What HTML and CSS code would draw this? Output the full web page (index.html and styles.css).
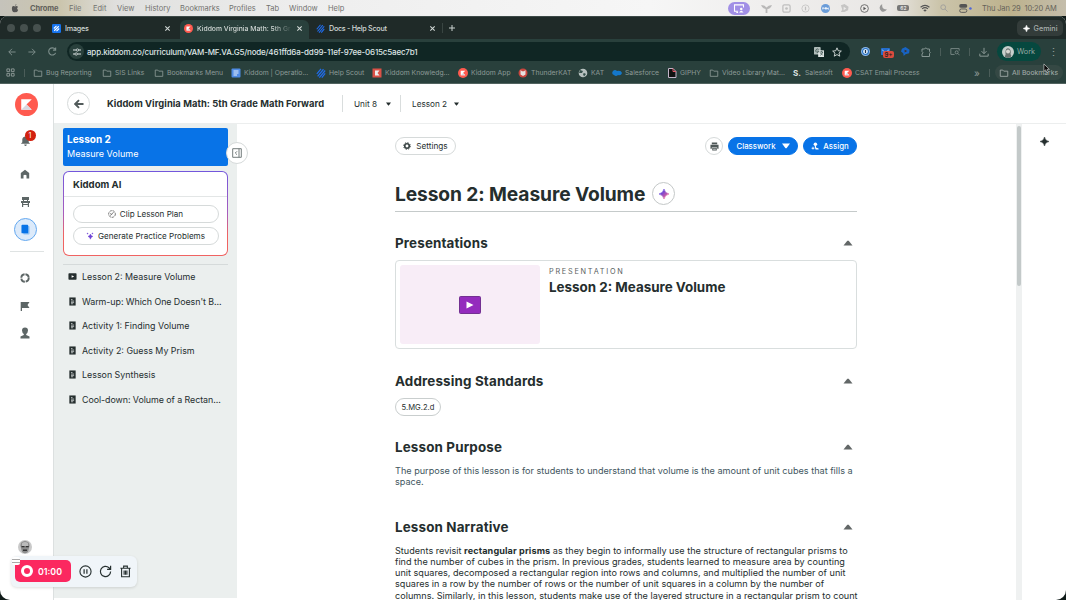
FILE: index.html
```html
<!DOCTYPE html>
<html lang="en">
<head>
    <meta charset="UTF-8">
    <meta name="viewport" content="width=device-width, initial-scale=1.0">
    <title>Kiddom Virginia Math: 5th Grade Math Forward</title>
    <link rel="stylesheet" href="styles.css">
</head>
<body>
    <!-- Shared icons -->
    <svg class="defs" width="0" height="0">
        <symbol id="folder" viewBox="0 0 12 12"><path d="M1.5 2.5h3l1.2 1.3h4.8v6.2h-9z" fill="none" stroke="currentColor" stroke-width="1"/></symbol>
        <symbol id="kiddom" viewBox="0 0 24 24"><circle cx="12" cy="12" r="12" fill="#ff5a4f"/><path d="M6.5 6.5h11L12 12l5.500 5.500h-11z" fill="#fff"/><path d="M6.500 17.500L12 12l5.500 5.500z" fill="#d9d7e0"/></symbol>
        <symbol id="bolt" viewBox="0 0 12 12"><path d="M1 7l5-6M2 10l7-8.500M4 11.500l7-8.500M7 11.500l4-5" stroke="#1f6bea" stroke-width="1.500"/></symbol>
        <symbol id="close" viewBox="0 0 8 8"><path d="M1.500 1.500l5 5M6.500 1.500l-5 5" stroke="currentColor" stroke-width="1.200"/></symbol>
        <symbol id="doc" viewBox="0 0 10 10"><path d="M1.500.5h7v9h-7z" fill="#252e2e"/><path d="M3.300 2.800h1.700M3.300 4.500h3.500M3.300 6h3.500M3.300 7.500h2.500" stroke="#e4e9e9" stroke-width=".8"/></symbol>
        <symbol id="spark" viewBox="0 0 12 12"><path d="M6 0Q6.800 5.200 12 6Q6.800 6.800 6 12Q5.200 6.800 0 6Q5.200 5.200 6 0z" fill="currentColor" stroke="currentColor" stroke-width=".7"/></symbol>
        <symbol id="down" viewBox="0 0 8 6"><path d="M0 .5h8L4.500 5.300h-1z" fill="currentColor"/></symbol>
        <symbol id="up" viewBox="0 0 10 6"><path d="M.5 5.500L4.300.8h1.400l3.800 4.700z" fill="#626767"/></symbol>
    </svg>

    <!-- macOS menu bar -->
    <div class="menubar">
        <div class="menus">
            <svg viewBox="0 0 10 12" width="8" height="9"><path d="M7 0Q5 .6 5 2.400Q6.800 2.300 7 0zM5 3.200Q7.800 2 9 4Q6.600 5.800 9.200 8Q7.800 12 5.200 10.800Q2.600 12 1.200 8.500Q0 3 3 2.800Q4 2.700 5 3.200z" fill="#555"/></svg>
            <b>Chrome</b><span>File</span><span>Edit</span><span>View</span><span>History</span><span>Bookmarks</span><span>Profiles</span><span>Tab</span><span>Window</span><span>Help</span>
        </div>
        <div class="status">
            <span class="share"><svg viewBox="0 0 12 10" width="12" height="9"><path d="M5 8H1V1h10v3M3 9.500h2" fill="none" stroke="#fff" stroke-width="1.200"/><circle cx="8.500" cy="5.500" r="1.400" fill="#fff"/><path d="M6 9.500q2.500-4 5 0z" fill="#fff"/></svg></span>
            <svg class="faint" viewBox="0 0 12 10" width="11" height="9"><path d="M0 1q4 0 6 3q2-3 6-3q-1 4-5 4.500V10H5V5.500Q1 5 0 1z" fill="#777"/></svg>
            <svg class="faint" viewBox="0 0 10 10" width="9" height="9"><rect x="1" y="1" width="8" height="8" rx="1.500" fill="none" stroke="#888" stroke-width="1.400"/><circle cx="5" cy="5" r="1.500" fill="#888"/></svg>
            <svg class="faint" viewBox="0 0 10 10" width="9" height="9"><circle cx="5" cy="5" r="4" fill="none" stroke="#999"/><path d="M5 3v4" stroke="#888" stroke-width="1.400"/></svg>
            <svg viewBox="0 0 10 10" width="9" height="9"><circle cx="5" cy="5" r="5" fill="#6a9cd8"/><path d="M2 6V4l1.500 1L5 4v2M6 6V4l2 2V4" fill="none" stroke="#fff"/></svg>
            <svg class="faint" viewBox="0 0 10 10" width="9" height="9"><path d="M1 1.500L5 0l4.500 3L9 7 5 9H1l1.500-3z" fill="#999"/><path d="M4 3l3 2-3 2z" fill="#eee"/></svg>
            <svg viewBox="0 0 10 10" width="9" height="9"><circle cx="5" cy="5" r="4.300" fill="none" stroke="#666"/><path d="M3.800 3l3 2-3 2z" fill="#555"/></svg>
            <svg viewBox="0 0 10 10" width="8" height="8"><path d="M4 0Q3 7 10 7Q7 11 3 9Q-2 4 4 0z" fill="#999"/></svg>
            <span class="battery">62</span>
            <svg viewBox="0 0 12 10" width="10" height="9"><path d="M.7 3.500q5.300-4.500 10.600 0M2.500 5.500q3.500-3 7 0" fill="none" stroke="#555" stroke-width="1.300"/><path d="M4 7q2-1.500 4 0L6 9z" fill="#555"/></svg>
            <svg viewBox="0 0 10 10" width="8" height="8"><circle cx="4" cy="4" r="3" fill="none" stroke="#999"/><path d="M6.300 6.300L9.500 9.500" stroke="#999"/></svg>
            <svg viewBox="0 0 14 10" width="13" height="9"><rect x="0" y="0" width="9" height="4.300" rx="2.100" fill="#555"/><rect x=".5" y="5.500" width="8" height="3.800" rx="1.900" fill="none" stroke="#555"/><circle cx="12.500" cy="5" r="1.400" fill="#4f66d8"/></svg>
            <span class="clock">Thu Jan 29&nbsp; 10:20 AM</span>
        </div>
    </div>

    <div class="window">
        <!-- Browser chrome -->
        <div class="tabs">
            <div class="lights"><i></i><i></i><i></i></div>
            <div class="tab tab-images">
                <svg viewBox="0 0 10 10" width="9" height="9"><rect width="10" height="10" rx="1.500" fill="#1673ed"/><path d="M2 5l3-3M2.500 7.500l5-5M5 8l3-3" stroke="#fff" stroke-width="1.200"/></svg>
                <span>Images</span>
                <svg width="7" height="7"><use href="#close"/></svg>
            </div>
            <div class="tab tab-active">
                <svg width="9" height="9"><use href="#kiddom"/></svg>
                <span class="fade">Kiddom Virginia Math: 5th Gr</span>
                <svg width="7" height="7"><use href="#close"/></svg>
            </div>
            <div class="tab tab-docs">
                <svg width="9" height="9"><use href="#bolt"/></svg>
                <span>Docs - Help Scout</span>
                <svg width="7" height="7"><use href="#close"/></svg>
            </div>
            <svg class="plus" viewBox="0 0 8 8" width="8" height="8"><path d="M4 1v6M1 4h6" stroke="#cbd2d0" stroke-width="1"/></svg>
            <div class="gemini"><svg width="7" height="7"><use href="#spark"/></svg>Gemini</div>
        </div>

        <div class="toolbar">
            <div class="nav">
                <svg viewBox="0 0 10 10" width="8" height="8"><path d="M9.500 5H1M5 1L1 5l4 4" fill="none" stroke="#7d8e8b" stroke-width="1.200"/></svg>
                <svg viewBox="0 0 10 10" width="8" height="8"><path d="M.5 5H9M5 1l4 4-4 4" fill="none" stroke="#7d8e8b" stroke-width="1.200"/></svg>
                <svg viewBox="0 0 10 10" width="9" height="9"><path d="M8.500 6.500A4 4 0 1 1 8 2.500M8.500.5v3h-3" fill="none" stroke="#7d8e8b" stroke-width="1.200"/></svg>
            </div>
            <div class="url">
                <span class="site"><svg viewBox="0 0 10 10" width="8" height="8"><path d="M0 2.500h4M7 2.500h3M0 7.500h2.500M5.500 7.500H10" stroke="#d9e0df" stroke-width="1.300"/><circle cx="5.500" cy="2.500" r="1.500" fill="none" stroke="#d9e0df"/><circle cx="4" cy="7.500" r="1.500" fill="none" stroke="#d9e0df"/></svg></span>
                <span class="address">app.kiddom.co/curriculum/VAM-MF.VA.G5/node/461ffd6a-dd99-11ef-97ee-0615c5aec7b1</span>
                <svg viewBox="0 0 12 12" width="10" height="10"><rect width="8" height="9" rx="1" fill="#aebbb8"/><rect x="5" y="4" width="7" height="8" fill="#dfe5e4"/><path d="M5.500 3A2 2 0 1 0 6 5H4M7 6h4M9 5v1M10.500 6q-1 3-3 4M7.500 7l3 3" fill="none" stroke="#27403c" stroke-width=".8"/></svg>
                <svg viewBox="0 0 12 12" width="10" height="10"><path d="M6 1l1.500 3.500 3.700.4-2.800 2.400.9 3.700L6 9.100 2.700 11l.9-3.700L.8 4.900l3.700-.4z" fill="none" stroke="#d5dddb" stroke-width="1.100"/></svg>
            </div>
            <div class="extensions">
                <svg viewBox="0 0 10 10" width="9" height="9"><circle cx="5" cy="5" r="5" fill="#8db7ea"/><circle cx="5" cy="5" r="3.300" fill="#d8e7f7" stroke="#2570c0" stroke-width="1.200"/><path d="M5 3.300v3.400" stroke="#234" stroke-width="1.200"/></svg>
                <span class="mail"><svg viewBox="0 0 10 10" width="9" height="9"><rect y="1" width="10" height="8" rx="1" fill="#236dcc"/><path d="M1 3l4 3 4-3" stroke="#9cc4ee" fill="none"/></svg><em>9+</em></span>
                <svg viewBox="0 0 10 10" width="9" height="9"><path d="M1 2l4-2 4.500 3L9 7 5 8l-2 2-.5-3L0 5z" fill="#1764c4"/><path d="M4 3l3 1.500L4 6z" fill="#3f342d"/></svg>
                <svg viewBox="0 0 10 10" width="10" height="10"><path d="M1 2h2.500a1.300 1.300 0 0 1 2.500 0h2.500v2.500a1.200 1.200 0 0 1 0 2V9.500H1V7Q3 5.800 1 4.500z" fill="none" stroke="#869693"/></svg>
                <i class="sep"></i>
                <svg viewBox="0 0 12 10" width="10" height="9"><path d="M5.500 8.500H1v-7h10V4" fill="none" stroke="#83928f"/><circle cx="8" cy="6" r="1.800" fill="none" stroke="#83928f"/><path d="M9.300 7.300L11.500 9.500" stroke="#83928f"/></svg>
                <i class="sep"></i>
                <svg viewBox="0 0 12 12" width="10" height="10"><path d="M6 1v7M3 5l3 3 3-3M1 8v3h10V8" fill="none" stroke="#8b9996" stroke-width="1.200"/></svg>
                <div class="profile"><svg viewBox="0 0 12 12" width="12" height="12"><circle cx="6" cy="6" r="6" fill="#c7cfcd"/><path d="M3.500 5Q4 1.500 7 2.500Q9.500 4 8.500 8Q11 11 6 12Q1 11 3.500 9z" fill="#68716f"/><circle cx="6" cy="5.500" r="2" fill="#d6d6d2"/></svg>Work</div>
                <span class="kebab">⋮</span>
            </div>
        </div>

        <div class="bookmarks">
            <svg viewBox="0 0 10 10" width="9" height="9"><path d="M1 1h3v3H1zM6 1h3v3H6zM1 6h3v3H1zM6 6h3v3H6z" fill="none" stroke="#8e9b99"/></svg>
            <i class="sep"></i>
            <div class="bookmark"><svg><use href="#folder"/></svg>Bug Reporting</div>
            <div class="bookmark"><svg><use href="#folder"/></svg>SIS Links</div>
            <div class="bookmark"><svg><use href="#folder"/></svg>Bookmarks Menu</div>
            <div class="bookmark"><svg viewBox="0 0 10 10"><rect x=".5" y=".5" width="9" height="9" rx="1" fill="#4f8be5"/><path d="M2.500 3h5M2.500 5h5M2.500 7h3.500" stroke="#e8f0fb"/></svg>Kiddom | Operatio...</div>
            <div class="bookmark"><svg><use href="#bolt"/></svg>Help Scout</div>
            <div class="bookmark"><svg viewBox="0 0 10 10"><rect x=".5" y=".5" width="9" height="9" fill="#db5147"/><path d="M3 2.500h4.500L5.500 5l2 2.500H3z" fill="#eee"/></svg>Kiddom Knowledg...</div>
            <div class="bookmark"><svg><use href="#kiddom"/></svg>Kiddom App</div>
            <div class="bookmark"><svg viewBox="0 0 10 10"><circle cx="5" cy="5" r="4.500" fill="#c9463f"/><path d="M2.500 2L4 3.200h2L7.500 2v4.500L5 8 2.500 6.500z" fill="#e5e0df"/></svg>ThunderKAT</div>
            <div class="bookmark"><svg viewBox="0 0 10 10"><circle cx="5" cy="5" r="4.300" fill="#b6c0be"/><path d="M2 2l3 1-1 2-3 0M6 5l2 1-2 2.500L5 6z" fill="#35504b"/></svg>KAT</div>
            <div class="bookmark"><svg viewBox="0 0 10 10"><path d="M1 3q2-2 4 0q4-1 5 2q-1 3-4 2q-2 2-4 0q-3-1-1-4z" fill="#1477ca"/></svg>Salesforce</div>
            <div class="bookmark"><svg viewBox="0 0 10 10"><path d="M1.500.5H6L9 3.500v6H1.500z" fill="#111" stroke="#c4b5c9"/><path d="M6 .5v3h3" fill="none" stroke="#e55c6a"/></svg>GIPHY</div>
            <div class="bookmark"><svg><use href="#folder"/></svg>Video Library Mat...</div>
            <div class="bookmark"><span class="salesloft">S.</span>Salesloft</div>
            <div class="bookmark"><svg><use href="#kiddom"/></svg>CSAT Email Process</div>
            <span class="more">»</span>
            <i class="sep"></i>
            <div class="bookmark all"><svg><use href="#folder"/></svg>All Bookmarks</div>
        </div>

        <!-- Kiddom app -->
        <div class="app">
            <nav class="rail">
                <svg class="logo" width="23" height="23"><use href="#kiddom"/></svg>
                <div class="bell"><svg viewBox="0 0 12 12" width="11" height="11"><path d="M1 9.500L2.500 8V5Q2.500 2 6 1.500Q9.500 2 9.500 5v3L11 9.500zM4.500 10.300h3Q7 12 6 12T4.500 10.300z" fill="#5d6666"/></svg><em>1</em></div>
                <svg class="home" viewBox="0 0 10 10" width="10" height="10"><path d="M.8 9.500V4L5 .8 9.200 4v5.500H6.500V6.300q-1.500-1.300-3 0v3.200z" fill="#5d6666"/></svg>
                <svg class="chair" viewBox="0 0 9 11" width="9" height="11"><path d="M1 1h7v3H1zM2 4h1v1H2zM6 4h1v1H6zM0 5h9v2H0zM1 7h1.200v4H1zM6.800 7H8v4H6.800zM2 8h5v1H2z" fill="#5d6666"/></svg>
                <div class="book"><svg viewBox="0 0 10 12" width="9" height="11"><rect x="2.500" y="2" width="7" height="9.500" rx="1" fill="#8fc0f4"/><rect x=".5" y=".8" width="7.500" height="9.500" rx="1" fill="#0873e7"/></svg></div>
                <hr>
                <svg class="ring" viewBox="0 0 12 12" width="10" height="10"><circle cx="6" cy="6" r="4.500" fill="none" stroke="#5d6666" stroke-width="2.200" stroke-dasharray="6 1.070"/></svg>
                <svg class="flag" viewBox="0 0 10 10" width="10" height="10"><path d="M.7 1h8.800L7.500 4l2 3H2v3H.7z" fill="#5d6666"/></svg>
                <svg class="person" viewBox="0 0 10 12" width="10" height="12"><path d="M5 .5Q8 .5 8 3.500Q7.800 6 6.200 7v1l3.300 1.500v2H.5v-2L3.800 8V7Q2.200 6 2 3.500Q2 .5 5 .5z" fill="#5d6666"/></svg>
                <svg class="avatar" viewBox="0 0 14 14" width="14" height="14"><circle cx="7" cy="7" r="7" fill="#c9c9c9"/><path d="M2.500 6Q2 1.500 7 1Q12 1.500 11.500 6L10 12Q7 14.500 4 12z" fill="#8d8d8d"/><path d="M4 3Q7 1 10 3V6H4z" fill="#bbb"/><path d="M3.500 6h3v1.300h-3zM7.800 6h3v1.300h-3zM5 9.500h4v1.500H5z" fill="#333"/></svg>
            </nav>

            <div class="workspace">
                <header class="topbar">
                    <button class="back"><svg viewBox="0 0 10 10" width="10" height="10"><path d="M9.500 5H2M5 1.200L1.200 5 5 8.800" fill="none" stroke="#525b5b" stroke-width="1.900"/></svg></button>
                    <strong>Kiddom Virginia Math: 5th Grade Math Forward</strong>
                    <div class="crumb unit">Unit 8<svg width="5" height="4"><use href="#down"/></svg></div>
                    <div class="crumb lesson">Lesson 2<svg width="5" height="4"><use href="#down"/></svg></div>
                </header>

                <div class="columns">
                    <aside class="sidebar">
                        <div class="lesson-card"><b>Lesson 2</b><span>Measure Volume</span></div>
                        <div class="ai-card">
                            <div class="ai-inner">
                                <h4>Kiddom AI</h4>
                                <button><svg viewBox="0 0 10 10" width="8" height="8"><circle cx="5" cy="5" r="4.200" fill="none" stroke="#555" stroke-dasharray="3 1"/><path d="M3 7l1.500-2L7 3M3 4l1.500 1.500" stroke="#555" fill="none"/></svg>Clip Lesson Plan</button>
                                <button class="generate"><svg viewBox="0 0 10 10" width="8" height="8"><path d="M5.500 2.500Q6 5 8.500 5.500Q6 6 5.500 9Q5 6 2.500 5.500Q5 5 5.500 2.500zM1.500 1.500h1v1h-1zM7.500 1.300h1v1h-1z" fill="#7146d6" stroke="#7146d6" stroke-width=".6"/></svg>Generate Practice Problems</button>
                            </div>
                        </div>
                        <ul class="outline">
                            <li><svg viewBox="0 0 10 10" width="9" height="9"><rect x=".5" y="1.500" width="9" height="7" rx=".8" fill="#252e2e"/><path d="M4 3.500L6.800 5 4 6.500z" fill="#fff"/></svg>Lesson 2: Measure Volume</li>
                            <li class="long"><svg width="9" height="9"><use href="#doc"/></svg>Warm-up: Which One Doesn't B...</li>
                            <li><svg width="9" height="9"><use href="#doc"/></svg>Activity 1: Finding Volume</li>
                            <li><svg width="9" height="9"><use href="#doc"/></svg>Activity 2: Guess My Prism</li>
                            <li><svg width="9" height="9"><use href="#doc"/></svg>Lesson Synthesis</li>
                            <li class="long"><svg width="9" height="9"><use href="#doc"/></svg>Cool-down: Volume of a Rectan...</li>
                        </ul>
                        <button class="collapse"><svg viewBox="0 0 10 10" width="10" height="10"><path d="M.7.7h8.600v8.600H.7zM7 .7v8.600M5 3.300L3.300 5 5 6.700" fill="none" stroke="#656e6e" stroke-width=".9"/></svg></button>
                    </aside>

                    <main class="content">
                        <div class="actions">
                            <button class="settings"><svg viewBox="0 0 10 10" width="8" height="8"><circle cx="5" cy="5" r="2.800" fill="none" stroke="#3a4444" stroke-width="2"/><circle cx="5" cy="5" r="4.200" fill="none" stroke="#3a4444" stroke-width="1.200" stroke-dasharray="1.650 1.650"/></svg>Settings</button>
                            <button class="print"><svg viewBox="0 0 10 10" width="9" height="9"><path d="M2 .5h6v2H2zM.5 3h9v4.500H8V6H2v1.500H.5zM2.500 6.800h5v2.700h-5z" fill="#505959"/><path d="M3.500 8h3" stroke="#fff" stroke-width=".8"/></svg></button>
                            <button class="primary classwork">Classwork<svg width="8" height="6"><use href="#down"/></svg></button>
                            <button class="primary assign"><svg viewBox="0 0 10 10" width="8" height="8"><circle cx="5.500" cy="2.700" r="2.200" fill="#fff"/><path d="M4.800 4.500h1.400V7l3.300 1.200v1.300H5.800L4.800 7zM2 6h1v1.300h1.200v1H3v1.200H2V8.300H.8v-1H2z" fill="#fff"/></svg>Assign</button>
                        </div>

                        <div class="title">
                            <h1>Lesson 2: Measure Volume</h1>
                            <span class="magic"><svg viewBox="0 0 12 12" width="10" height="10"><defs><linearGradient id="magic" x1="0" x2="1" y1="0" y2="1"><stop offset=".3" stop-color="#6944da"/><stop offset=".75" stop-color="#dc5e9b"/></linearGradient></defs><path d="M6 0Q7 5 12 6Q7 7 6 12Q5 7 0 6Q5 5 6 0z" fill="url(#magic)" stroke="url(#magic)" stroke-width=".7"/></svg></span>
                        </div>

                        <section class="presentations">
                            <h2><span>Presentations</span><svg width="10" height="6"><use href="#up"/></svg></h2>
                            <div class="card">
                                <div class="thumb"><svg viewBox="0 0 22 18" width="22" height="18"><rect x=".5" y=".5" width="21" height="17" rx="1" fill="#942bbd" stroke="#733092"/><path d="M7.500 5.500L14.500 9l-7 3.500z" fill="#fff"/></svg></div>
                                <div>
                                    <small>PRESENTATION</small>
                                    <h3>Lesson 2: Measure Volume</h3>
                                </div>
                            </div>
                        </section>

                        <section class="standards">
                            <h2><span>Addressing Standards</span><svg width="10" height="6"><use href="#up"/></svg></h2>
                            <span class="chip">5.MG.2.d</span>
                        </section>

                        <section class="purpose">
                            <h2><span>Lesson Purpose</span><svg width="10" height="6"><use href="#up"/></svg></h2>
                            <p>The purpose of this lesson is for students to understand that volume is the amount of unit cubes that fills a<br>space.</p>
                        </section>

                        <section class="narrative">
                            <h2><span>Lesson Narrative</span><svg width="10" height="6"><use href="#up"/></svg></h2>
                            <p>Students revisit <b>rectangular prisms</b> as they begin to informally use the structure of rectangular prisms to<br>find the number of cubes in the prism. In previous grades, students learned to measure area by counting<br>unit squares, decomposed a rectangular region into rows and columns, and multiplied the number of unit<br>squares in a row by the number of rows or the number of unit squares in a column by the number of<br>columns. Similarly, in this lesson, students make use of the layered structure in a rectangular prism to count</p>
                        </section>
                    </main>

                    <div class="scrollbar"><div class="thumb-bar"></div></div>
                    <div class="right-rail"><svg width="9" height="9"><use href="#spark"/></svg></div>
                </div>
            </div>
        </div>
    </div>

    <!-- Screen recorder controls -->
    <div class="recorder">
        <span class="grip"></span>
        <div class="stop"><i></i>01:00</div>
        <svg viewBox="0 0 14 14" width="13" height="13"><circle cx="7" cy="7" r="6" fill="none" stroke="#263030" stroke-width="1.200"/><path d="M5.500 4.500v5M8.500 4.500v5" stroke="#263030" stroke-width="1.300"/></svg>
        <svg viewBox="0 0 14 14" width="13" height="13"><path d="M12.500 7A5.500 5.500 0 1 1 10.800 3L12.500 4.500M12.500.8v3.900H8.700" fill="none" stroke="#263030" stroke-width="1.300"/></svg>
        <svg viewBox="0 0 14 14" width="13" height="13"><path d="M1.500 3.500h11M5 3V1.200h4V3M2.800 4v8.700h8.400V4M5.500 6v4.500M7 6v4.500M8.500 6v4.500" fill="none" stroke="#263030" stroke-width="1.200"/></svg>
    </div>
    <svg class="cursor" viewBox="0 0 8 12" width="7" height="11"><path d="M1 .8v8.500L3 7.500l1.500 3.300 1.600-.8-1.500-3h2.700z" fill="#080808" stroke="#ddd" stroke-width=".7"/></svg>
</body>
</html>
```
FILE: styles.css
```css
* {
    box-sizing: border-box;
}
body {
    margin: 0;
    width: 1066px;
    height: 600px;
    overflow: hidden;
    background: #101b19;
    font-family: Inter, "Liberation Sans", sans-serif;
    color: #252e2e;
    white-space: nowrap;
}
svg {
    display: block;
    flex: none;
}
.defs {
    position: absolute;
}
button {
    font: inherit;
    color: inherit;
    padding: 0;
    background: #fff;
    border: 1px solid #d6dada;
    display: flex;
    align-items: center;
    justify-content: center;
}
h1, h2, h3, h4, p, ul {
    margin: 0;
    padding: 0;
}
em {
    font-style: normal;
}

/* menu bar */
.menubar {
    height: 16px;
    display: flex;
    justify-content: space-between;
    background: linear-gradient(90deg, #c5c3bb 0, #cbc5ad 60px, #dfdfdd 115px, #eeeeee 300px, #f6f6f6 650px, #e9e7e5 890px, #cbc4aa 940px, #bdb28d 1010px, #c4bdab 1066px);
    font-size: 7.5px;
    color: #72726f;
}
.menus {
    display: grid;
    grid-template-columns: 19px 39px 24px 24px 28px 35px 49px 37px 23px 39px 20px;
    align-items: center;
    padding-left: 11px;
}
.menus b {
    color: #62615b;
    letter-spacing: -0.1px;
}
.status {
    display: flex;
    align-items: center;
    padding-right: 10px;
    gap: 10.4px;
}
.share {
    display: grid;
    place-items: center;
    width: 22px;
    height: 13px;
    border-radius: 7px;
    background: #a18fe6;
}
.faint {
    opacity: 0.45;
}
.battery {
    width: 12px;
    height: 6px;
    border-radius: 2px;
    background: #777;
    color: #fff;
    font-size: 5px;
    line-height: 6px;
    text-align: center;
}
.clock {
    width: 74px;
    font-size: 7.5px;
    color: #66635a;
    letter-spacing: -0.15px;
}

/* browser */
.window {
    height: 584px;
    border-radius: 8px 8px 10px 10px;
    overflow: hidden;
    background: #fff;
}
.tabs {
    height: 23px;
    display: flex;
    align-items: center;
    background: #1f2a28;
    border-top: 1px solid #3c4947;
    color: #d2d8d6;
    font-size: 7.2px;
    font-weight: 500;
}
.lights {
    display: flex;
    gap: 5px;
    width: 45px;
    padding-left: 7px;
}
.lights i {
    width: 8px;
    height: 8px;
    border-radius: 50%;
    background: #46504e;
}
.tab {
    display: flex;
    align-items: center;
    gap: 4px;
    height: 100%;
}
.tab span {
    flex: 1;
}
.tab-images {
    width: 135px;
    padding: 0 9px 0 7px;
}
.tab-images span {
    letter-spacing: -0.2px;
}
.tab-active {
    width: 129px;
    padding: 0 6px 2px 4px;
    height: 19px;
    align-self: flex-end;
    border-radius: 6px 6px 0 0;
    background: #29403c;
}
.tab-active .fade {
    font-size: 6.8px;
    -webkit-mask-image: linear-gradient(90deg, #000 80%, transparent);
    mask-image: linear-gradient(90deg, #000 80%, transparent);
}
.tab-docs {
    width: 134px;
    height: 10px;
    padding: 0 6px 0 7px;
    border-right: 1px solid #394542;
}
.tab-docs span {
    letter-spacing: -0.28px;
}
.plus {
    margin-left: 5px;
}
.gemini {
    margin-left: auto;
    margin-right: 3px;
    display: flex;
    align-items: center;
    justify-content: center;
    gap: 4px;
    width: 46px;
    height: 16px;
    border-radius: 5px;
    background: #333c3a;
    color: #a8afad;
}
.gemini svg {
    color: #fff;
}
.toolbar {
    height: 24px;
    padding-top: 1px;
    display: flex;
    align-items: center;
    background: #29403c;
}
.nav {
    display: flex;
    align-items: center;
    gap: 12px;
    width: 67px;
    padding-left: 8px;
}
.url {
    width: 783px;
    height: 19px;
    display: flex;
    align-items: center;
    padding: 0 8px 0 2px;
    gap: 8px;
    border-radius: 10px;
    background: #102624;
    color: #dfe5e4;
    font-size: 8px;
    font-weight: 500;
}
.site {
    width: 15px;
    height: 15px;
    display: grid;
    place-items: center;
    border-radius: 50%;
    background: #29403c;
}
.address {
    flex: 1;
    margin-left: -5px;
    letter-spacing: -0.18px;
}
.extensions {
    flex: 1;
    display: flex;
    align-items: center;
    padding-left: 11px;
    gap: 11px;
    color: #94a19e;
}
.sep {
    width: 1px;
    height: 8px;
    background: #4b5d59;
}
.extensions .sep {
    margin: 0 -2px;
}
.mail {
    position: relative;
}
.mail em {
    position: absolute;
    left: 2px;
    top: 4px;
    width: 11px;
    height: 7px;
    border-radius: 2px;
    background: #db4b3d;
    color: #28211e;
    font-size: 6px;
    line-height: 7px;
    font-weight: 600;
    text-align: center;
}
.profile {
    display: flex;
    align-items: center;
    gap: 3px;
    width: 44px;
    height: 19px;
    margin-left: -3px;
    padding-left: 5px;
    border-radius: 10px;
    background: #06483f;
    color: #96a9a3;
    font-size: 7.3px;
}
.kebab {
    margin-left: -4px;
    font-size: 11px;
}
.bookmarks {
    height: 21px;
    display: grid;
    grid-template-columns: 18px 9px 69px 52px 77px 85px 56px 86px 60px 60px 34px 55px 42px 84px 49px 132px 15px 6px 68px;
    align-items: center;
    padding-left: 6px;
    padding-bottom: 1px;
    background: #29403c;
    border-bottom: 1px solid #51635f;
    font-size: 6.8px;
    color: #8d9a97;
}
.bookmark {
    display: flex;
    align-items: center;
    gap: 3px;
}
.bookmark svg {
    width: 10px;
    height: 10px;
}
.salesloft {
    width: 9px;
    color: #e0e7e4;
    font-size: 8px;
    font-weight: 700;
}
.more {
    font-size: 10px;
}
.all {
    height: 15px;
    padding-left: 4px;
    border-radius: 8px;
    background: #354844;
    color: #a7b0ae;
}

/* app layout */
.app {
    height: 516px;
    display: flex;
}
.rail {
    width: 54px;
    display: flex;
    flex-direction: column;
    align-items: center;
    padding: 9px 3px 0 0;
    border-right: 1px solid #dce0e0;
}
.rail .logo {
    margin-left: 3px;
}
.bell {
    position: relative;
    margin-top: 19px;
}
.bell em {
    position: absolute;
    left: 5px;
    top: -5px;
    width: 11px;
    height: 11px;
    border-radius: 50%;
    background: #d2210e;
    color: #fff;
    font-size: 7px;
    line-height: 11px;
    text-align: center;
}
.home {
    margin-top: 23px;
}
.chair {
    margin-top: 17px;
}
.book {
    display: grid;
    place-items: center;
    width: 23px;
    height: 23px;
    margin-top: 11px;
    border: 1px solid #65a9f0;
    border-radius: 50%;
    background: #dceafa;
}
.rail hr {
    width: 34px;
    margin: 10px 0 21px 3px;
    border: 0;
    border-top: 1px solid #dfe3e3;
}
.flag {
    margin-top: 18px;
}
.person {
    margin-top: 16px;
}
.avatar {
    margin-top: auto;
    margin-bottom: 46px;
}
.workspace {
    flex: 1;
    display: flex;
    flex-direction: column;
}
.topbar {
    height: 40px;
    display: flex;
    align-items: center;
    padding-left: 13px;
    border-bottom: 1px solid #eceeee;
    font-size: 9px;
}
.back {
    width: 23px;
    height: 23px;
    border-radius: 50%;
    margin-right: 17px;
}
.topbar strong {
    width: 235px;
    font-size: 9.4px;
    letter-spacing: 0.05px;
}
.crumb {
    height: 17px;
    display: flex;
    align-items: center;
    justify-content: space-between;
    border-left: 1px solid #d9dddd;
    padding-left: 11px;
    font-size: 8.2px;
}
.unit {
    width: 58px;
    padding-right: 9px;
}
.lesson {
    width: 59px;
}
.columns {
    flex: 1;
    min-height: 0;
    display: flex;
}

/* sidebar */
.sidebar {
    position: relative;
    width: 183px;
    height: 474px;
    padding: 4px 9px;
    background: #ebefee;
}
.lesson-card {
    height: 38px;
    padding: 5px 4px;
    border-radius: 2px;
    background: #0873e7;
    color: #fff;
    display: flex;
    flex-direction: column;
}
.lesson-card b {
    font-size: 10px;
    line-height: 13px;
}
.lesson-card span {
    font-size: 9px;
    line-height: 16px;
}
.ai-card {
    height: 85px;
    margin-top: 4.5px;
    padding: 1px;
    border-radius: 6px;
    background: linear-gradient(#7256dc, #a75cbe 50%, #f06362 75%);
}
.ai-inner {
    height: 100%;
    border-radius: 5px;
    background: #fff;
}
.ai-card h4 {
    height: 25px;
    padding-left: 9px;
    border-bottom: 1px solid #e3e6e6;
    font-size: 9.6px;
    line-height: 25px;
}
.ai-card button {
    width: 146px;
    height: 18px;
    margin: 8px auto 0;
    gap: 4px;
    border-radius: 9px;
    font-size: 8.1px;
}
.ai-card .generate {
    margin-top: 4.5px;
}
.outline {
    list-style: none;
    margin-top: 8px;
    border-top: 1px solid #d5dada;
}
.outline li {
    height: 24.5px;
    display: flex;
    align-items: center;
    gap: 5px;
    padding-left: 5px;
    font-size: 8.9px;
}
.outline .long {
    letter-spacing: -0.06px;
}
.collapse {
    position: absolute;
    right: -11px;
    top: 18px;
    width: 22px;
    height: 22px;
    border-radius: 50%;
}

/* lesson content */
.content {
    width: 779px;
    overflow: hidden;
    padding: 13px 159px 0 158px;
}
.actions {
    display: flex;
    gap: 5px;
    font-size: 8.2px;
}
.actions button {
    height: 18px;
    border-radius: 9px;
}
.settings {
    width: 61px;
    gap: 5px;
}
.actions .print {
    width: 18px;
    margin-left: auto;
}
.actions .primary {
    gap: 6px;
    border-color: #0873e7;
    background: #0873e7;
    color: #fff;
    font-weight: 500;
    font-size: 7.8px;
}
.actions .classwork {
    width: 70px;
}
.actions .assign {
    width: 54px;
    gap: 4px;
}
.title {
    height: 36px;
    margin-top: 21px;
    display: flex;
    align-items: center;
    gap: 6px;
    border-bottom: 1px solid #c5caca;
}
h1 {
    width: 251px;
    font-size: 19.2px;
    letter-spacing: -0.1px;
}
.magic {
    display: grid;
    place-items: center;
    width: 23px;
    height: 23px;
    border: 1px solid #c4c8c8;
    border-radius: 50%;
}
h2 {
    height: 20px;
    display: flex;
    align-items: center;
    justify-content: space-between;
    padding-right: 4px;
    font-size: 13.4px;
    letter-spacing: 0.15px;
}
.presentations {
    margin-top: 21px;
}
.card {
    height: 89px;
    margin-top: 7px;
    padding: 4px;
    display: flex;
    gap: 9px;
    border: 1px solid #d9dede;
    border-radius: 4px;
}
.thumb {
    display: grid;
    place-items: center;
    width: 140px;
    border-radius: 3px;
    background: #f8edf7;
}
.card small {
    display: block;
    margin-top: 1px;
    font-size: 7.3px;
    line-height: 11px;
    letter-spacing: 1.75px;
    color: #596161;
}
.card h3 {
    font-size: 13.4px;
    line-height: 20px;
}
.standards {
    margin-top: 22px;
}
.chip {
    display: grid;
    place-items: center;
    width: 46px;
    height: 18px;
    margin-top: 7px;
    border: 1px solid #c9cece;
    border-radius: 9px;
    font-size: 7.6px;
}
.purpose {
    margin-top: 21px;
}
.content p {
    margin-top: 8px;
    font-size: 9.1px;
    line-height: 11.1px;
    letter-spacing: 0.01px;
}
.purpose p {
    color: #42565e;
}
.narrative {
    margin-top: 30px;
}
.narrative b {
    letter-spacing: 0.12px;
}
.scrollbar {
    width: 6px;
    background: #eff1f1;
}
.thumb-bar {
    width: 4px;
    height: 160px;
    margin: 2px 1px;
    border-radius: 2px;
    background: #c3c9c9;
}
.right-rail {
    flex: 1;
    display: flex;
    justify-content: center;
    padding-top: 13px;
}

/* overlays */
.recorder {
    position: absolute;
    left: 11px;
    top: 556px;
    width: 126px;
    height: 31px;
    display: flex;
    align-items: center;
    gap: 7px;
    padding: 0 0 1px 4px;
    border-radius: 6px;
    background: #f0f5f9;
    box-shadow: 0 1px 3px rgba(0, 0, 0, 0.12);
}
.stop {
    width: 56px;
    height: 22px;
    margin-right: 1px;
    display: flex;
    align-items: center;
    gap: 5px;
    padding-left: 6px;
    border-radius: 5px;
    background: #fb2860;
    color: #fff;
    font-size: 8.8px;
    font-weight: 600;
}
.stop i {
    width: 12px;
    height: 12px;
    border: 3px solid #fff;
    border-radius: 50%;
}
.grip {
    position: absolute;
    left: 1px;
    top: 1px;
    width: 8px;
    height: 8px;
    border-radius: 2px;
    background: linear-gradient(#fff 2px, #aaa 2px 3px, #fff 3px 5px, #aaa 5px 6px, #fff 6px);
}
.cursor {
    position: absolute;
    left: 1043px;
    top: 63px;
}
```
